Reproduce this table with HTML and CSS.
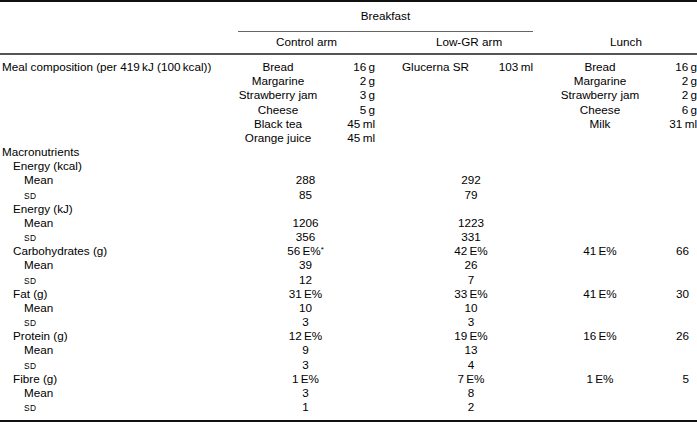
FILE: index.html
```html
<!DOCTYPE html>
<html>
<head>
<meta charset="utf-8">
<link rel="stylesheet" href="styles.css">
</head>
<body>
<table class="tbl">
  <colgroup>
    <col class="c-label"><col class="c-cname"><col class="c-camt"><col class="c-sp1"><col class="c-lname"><col class="c-lamt"><col class="c-sp2"><col class="c-uname"><col class="c-uamt">
  </colgroup>
  <thead>
    <tr class="h1">
      <th></th>
      <th colspan="5" class="bf">Breakfast</th>
      <th></th>
      <th colspan="2"></th>
    </tr>
    <tr class="h2">
      <th></th>
      <th colspan="2" class="ctr">Control arm</th>
      <th></th>
      <th colspan="2" class="ctr lowgr">Low-GR arm</th>
      <th></th>
      <th colspan="2" class="ctr">Lunch</th>
    </tr>
  </thead>
  <tbody>
    <tr class="first">
      <td class="lbl">Meal composition (per 419&#8201;kJ (100&#8201;kcal))</td>
      <td class="food">Bread</td><td class="amt">16&#8201;g</td><td></td>
      <td class="food-l">Glucerna SR</td><td class="amt">103&#8201;ml</td><td></td>
      <td class="food">Bread</td><td class="amt">16&#8201;g</td>
    </tr>
    <tr><td></td><td class="food">Margarine</td><td class="amt">2&#8201;g</td><td></td><td></td><td></td><td></td><td class="food">Margarine</td><td class="amt">2&#8201;g</td></tr>
    <tr><td></td><td class="food">Strawberry jam</td><td class="amt">3&#8201;g</td><td></td><td></td><td></td><td></td><td class="food">Strawberry jam</td><td class="amt">2&#8201;g</td></tr>
    <tr><td></td><td class="food">Cheese</td><td class="amt">5&#8201;g</td><td></td><td></td><td></td><td></td><td class="food">Cheese</td><td class="amt">6&#8201;g</td></tr>
    <tr><td></td><td class="food">Black tea</td><td class="amt">45&#8201;ml</td><td></td><td></td><td></td><td></td><td class="food">Milk</td><td class="amt">31&#8201;ml</td></tr>
    <tr><td></td><td class="food">Orange juice</td><td class="amt">45&#8201;ml</td><td></td><td></td><td></td><td></td><td></td><td></td></tr>

    <tr><td class="lbl">Macronutrients</td><td colspan="8"></td></tr>
    <tr><td class="lbl in1">Energy (kcal)</td><td colspan="8"></td></tr>
    <tr><td class="lbl in2">Mean</td><td colspan="2" class="num">288</td><td></td><td colspan="2" class="num lnum">292</td><td></td><td></td><td></td></tr>
    <tr><td class="lbl in2"><span class="sd">SD</span></td><td colspan="2" class="num">85</td><td></td><td colspan="2" class="num lnum">79</td><td></td><td></td><td></td></tr>
    <tr><td class="lbl in1">Energy (kJ)</td><td colspan="8"></td></tr>
    <tr><td class="lbl in2">Mean</td><td colspan="2" class="num">1206</td><td></td><td colspan="2" class="num lnum">1223</td><td></td><td></td><td></td></tr>
    <tr><td class="lbl in2"><span class="sd">SD</span></td><td colspan="2" class="num">356</td><td></td><td colspan="2" class="num lnum">331</td><td></td><td></td><td></td></tr>

    <tr><td class="lbl in1">Carbohydrates (g)</td><td colspan="2" class="num">56&#8201;E%<sup class="ast">*</sup></td><td></td><td colspan="2" class="num lnum">42&#8201;E%</td><td></td><td class="food">41&#8201;E%</td><td class="unum">66</td></tr>
    <tr><td class="lbl in2">Mean</td><td colspan="2" class="num">39</td><td></td><td colspan="2" class="num lnum">26</td><td></td><td></td><td></td></tr>
    <tr><td class="lbl in2"><span class="sd">SD</span></td><td colspan="2" class="num">12</td><td></td><td colspan="2" class="num lnum">7</td><td></td><td></td><td></td></tr>

    <tr><td class="lbl in1">Fat (g)</td><td colspan="2" class="num">31&#8201;E%</td><td></td><td colspan="2" class="num lnum">33&#8201;E%</td><td></td><td class="food">41&#8201;E%</td><td class="unum">30</td></tr>
    <tr><td class="lbl in2">Mean</td><td colspan="2" class="num">10</td><td></td><td colspan="2" class="num lnum">10</td><td></td><td></td><td></td></tr>
    <tr><td class="lbl in2"><span class="sd">SD</span></td><td colspan="2" class="num">3</td><td></td><td colspan="2" class="num lnum">3</td><td></td><td></td><td></td></tr>

    <tr><td class="lbl in1">Protein (g)</td><td colspan="2" class="num">12&#8201;E%</td><td></td><td colspan="2" class="num lnum">19&#8201;E%</td><td></td><td class="food">16&#8201;E%</td><td class="unum">26</td></tr>
    <tr><td class="lbl in2">Mean</td><td colspan="2" class="num">9</td><td></td><td colspan="2" class="num lnum">13</td><td></td><td></td><td></td></tr>
    <tr><td class="lbl in2"><span class="sd">SD</span></td><td colspan="2" class="num">3</td><td></td><td colspan="2" class="num lnum">4</td><td></td><td></td><td></td></tr>

    <tr><td class="lbl in1">Fibre (g)</td><td colspan="2" class="num">1&#8201;E%</td><td></td><td colspan="2" class="num lnum">7&#8201;E%</td><td></td><td class="food">1&#8201;E%</td><td class="unum">5</td></tr>
    <tr><td class="lbl in2">Mean</td><td colspan="2" class="num">3</td><td></td><td colspan="2" class="num lnum">8</td><td></td><td></td><td></td></tr>
    <tr class="last"><td class="lbl in2"><span class="sd">SD</span></td><td colspan="2" class="num">1</td><td></td><td colspan="2" class="num lnum">2</td><td></td><td></td><td></td></tr>
  </tbody>
</table>
</body>
</html>
```

FILE: styles.css
```css
html, body {
  margin: 0;
  padding: 0;
  background: #fff;
}

body {
  font-family: "Liberation Sans", Arial, Helvetica, sans-serif;
  font-size: 11.7px;
  color: #000;
}

.tbl {
  width: 697px;
  table-layout: fixed;
  border-collapse: collapse;
  border-top: 2px solid #111;
  border-bottom: 2px solid #111;
}

.c-label { width: 238px; }
.c-cname { width: 80px; }
.c-camt { width: 57px; }
.c-sp1 { width: 27px; }
.c-lname { width: 78px; }
.c-lamt { width: 53px; }
.c-sp2 { width: 22px; }
.c-uname { width: 90px; }
.c-uamt { width: 52px; }

th, td {
  padding: 0;
  font-weight: normal;
  line-height: 14.17px;
  white-space: nowrap;
  vertical-align: middle;
}

.h1 th {
  height: 29px;
}

.h1 .bf {
  text-align: center;
  border-bottom: 1px solid #666;
}

.h2 th {
  height: 21px;
  border-bottom: 2px solid #555;
}

.ctr {
  text-align: center;
}

.lowgr {
  padding-left: 3px;
}

tbody tr.first td {
  padding-top: 5px;
}

tbody tr.last td {
  padding-bottom: 6px;
}

.lbl {
  text-align: left;
  padding-left: 2px;
}

.in1 { padding-left: 13px; }
.in2 { padding-left: 24px; }

.food {
  text-align: center;
}

.food-l {
  text-align: left;
}

.amt {
  text-align: right;
}

.num {
  text-align: center;
  padding-right: 2px;
}

.lnum {
  padding-left: 7px;
  padding-right: 0;
}

.unum {
  text-align: right;
  padding-right: 8px;
}

.sd {
  font-size: 8.4px;
  line-height: 0;
  letter-spacing: 0.3px;
}

.ast {
  font-size: 8px;
  line-height: 0;
  vertical-align: 3px;
}
```
